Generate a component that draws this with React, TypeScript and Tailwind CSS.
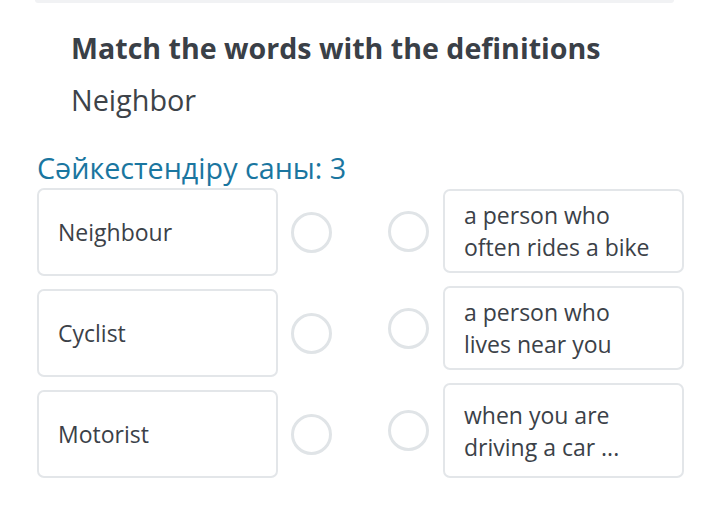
const left = ["Neighbour", "Cyclist", "Motorist"];
const right = [
  { text: ["a person who", "often rides a bike"], h: "h-[84px]" },
  { text: ["a person who", "lives near you"], h: "h-[84px]" },
  { text: ["when you are", "driving a car ..."], h: "h-[95px]" },
];

const Circle = () => (
  <div className="w-[41px] h-[41px] shrink-0 rounded-full border-[3px] border-[#e0e4e7] bg-white" />
);

export default function App() {
  return (
    <div className="w-[709px] h-[508px] bg-white overflow-hidden text-[#3b4148] font-['Open_Sans',sans-serif]">
      <div className="mx-[35px] h-[3px] rounded-b bg-[#f1f2f4]" />

      <div className="pl-[71px] pt-[26px]">
        <h1 className="text-[28.6px] leading-[38px] font-bold text-[#3a4047]">
          Match the words with the definitions
        </h1>
        <p className="mt-[15px] text-[28.8px] leading-[36px] text-[#3d4349]">Neighbor</p>
      </div>

      <div className="pl-[37px] pt-[32px]">
        <p className="text-[28.7px] leading-[36px] text-[#1a76a0]">Сәйкестендіру саны: 3</p>

        <div className="mt-[2px] flex">
          <div className="flex flex-col gap-[13px]">
            {left.map((w) => (
              <div key={w} className="flex items-center gap-[13px]">
                <div className="w-[241px] h-[88px] rounded-[7px] border-2 border-[#e3e6e9] flex items-center pl-[19px] text-[23px]">
                  {w}
                </div>
                <Circle />
              </div>
            ))}
          </div>

          <div className="ml-[56px] mt-[1px] flex flex-col gap-[13px]">
            {right.map((r, i) => (
              <div key={i} className="flex items-center gap-[14px]">
                <Circle />
                <div className={`w-[241px] ${r.h} rounded-[7px] border-2 border-[#e3e6e9] flex flex-col justify-center pl-[19px] text-[23px] leading-[32px]`}>
                  {r.text.map((t) => (
                    <span key={t}>{t}</span>
                  ))}
                </div>
              </div>
            ))}
          </div>
        </div>
      </div>
    </div>
  );
}
